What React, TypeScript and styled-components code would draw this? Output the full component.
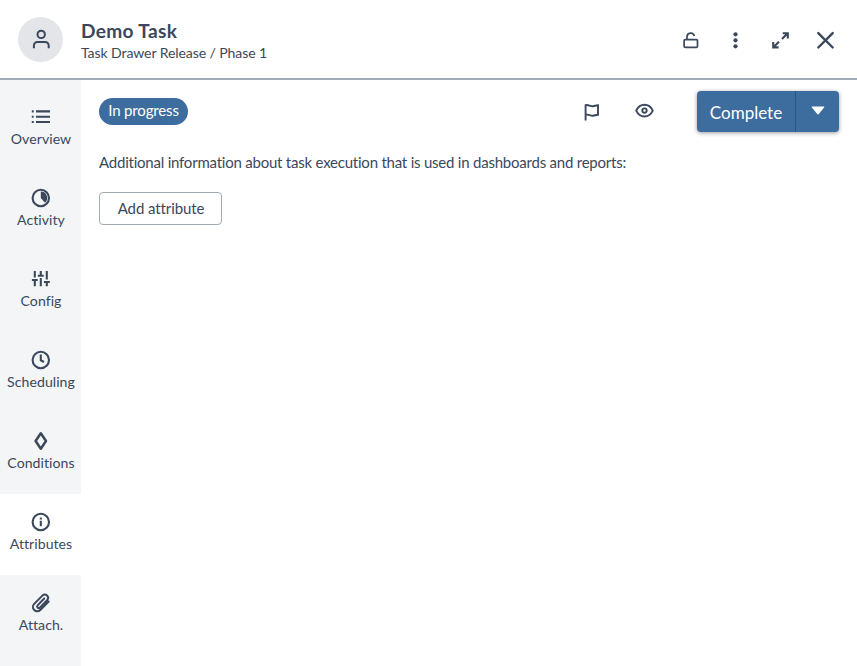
import React from 'react';
import styled, { createGlobalStyle } from 'styled-components';

const ink = '#3b485c';
const blue = '#3d6c9e';

const GlobalStyle = createGlobalStyle`
  * { box-sizing: border-box; }
  body {
    margin: 0;
    background: #fff;
    color: ${ink};
    font-family: Lato, "Liberation Sans", sans-serif;
    font-variant-ligatures: none;
  }
  button { font-family: inherit; color: inherit; }
`;

const Drawer = styled.div`
  display: flex;
  flex-direction: column;
  height: 100vh;
  overflow: hidden;
`;

const Header = styled.header`
  display: flex;
  align-items: center;
  height: 80px;
  flex: none;
  padding: 0 9px 0 18px;
  border-bottom: 2px solid #a0abb8;
`;

const Avatar = styled.div`
  display: grid;
  place-items: center;
  width: 45px;
  height: 45px;
  margin-right: 18px;
  border-radius: 50%;
  background: #e4e5e9;
`;

const Titles = styled.div`
  flex: 1;
  padding-top: 3px;
`;

const Title = styled.h1`
  margin: 0;
  font-size: 19.1px;
  line-height: 24px;
  font-weight: 700;
  letter-spacing: 0.33px;
`;

const Path = styled.div`
  font-size: 14.1px;
  line-height: 20px;
  letter-spacing: -0.11px;
`;

const IconButton = styled.button<{ $width?: number }>`
  display: grid;
  place-items: center;
  width: ${(p) => p.$width ?? 45}px;
  height: 45px;
  padding: 2px 0 0;
  border: 0;
  background: none;
`;

const Body = styled.div`
  display: flex;
  flex: 1;
  min-height: 0;
`;

const Sidebar = styled.nav`
  flex: none;
  width: 81px;
  padding-top: 9px;
  background: #f3f5f7;
`;

const NavItem = styled.a<{ $active?: boolean }>`
  display: flex;
  flex-direction: column;
  align-items: center;
  height: 81px;
  padding-top: 18px;
  background: ${(p) => (p.$active ? '#fff' : 'transparent')};
  font-size: 14.1px;
  line-height: 20px;
  letter-spacing: 0.05px;
  white-space: nowrap;
`;

const NavLabel = styled.span`
  margin-top: 1px;
  padding-left: 1px;
`;

const Content = styled.main`
  flex: 1;
  padding: 11px 18px 0;
`;

const Toolbar = styled.div`
  display: flex;
  align-items: center;
  height: 41px;
`;

const Status = styled.span`
  width: 89px;
  height: 27px;
  border-radius: 14px;
  background: ${blue};
  color: #fff;
  font-size: 15px;
  line-height: 25px;
  letter-spacing: -0.15px;
  text-align: center;
`;

const Tools = styled.div`
  display: flex;
  margin-left: auto;
  margin-right: 26px;
`;

const SplitButton = styled.div`
  display: flex;
  height: 41px;
  border-radius: 4px;
  background: ${blue};
  box-shadow: 0 1px 4px rgba(0, 0, 0, 0.4);
`;

const MainAction = styled.button`
  width: 99px;
  padding: 2px 0 0;
  border: 0;
  border-right: 1px solid #2c5682;
  background: none;
  color: #fff;
  font-size: 17px;
  letter-spacing: 0;
`;

const MenuAction = styled.button`
  display: grid;
  place-items: center;
  width: 43px;
  padding: 0;
  border: 0;
  background: none;
`;

const Description = styled.p`
  margin: 19px 0 0;
  font-size: 15px;
  line-height: 22px;
  letter-spacing: -0.22px;
`;

const AddButton = styled.button`
  width: 123px;
  height: 33px;
  margin-top: 19px;
  padding: 0 0 2px 1px;
  border: 1px solid #a0abb8;
  border-radius: 4px;
  background: #fff;
  font-size: 15px;
  letter-spacing: -0.1px;
`;

const Svg = styled.svg<{ $weight?: number }>`
  display: block;
  flex: none;
  width: 21px;
  height: 21px;
  overflow: visible;
  fill: none;
  stroke: ${ink};
  stroke-width: ${(p) => p.$weight ?? 2.1};
`;

const Solid = styled.g`
  fill: ${ink};
  stroke: none;
`;

const Caret = styled.svg`
  width: 14px;
  height: 9px;
  margin-bottom: 2px;
  fill: #fff;
`;

const navItems = [
  {
    label: 'Overview',
    icon: (
      <Svg viewBox="0 0 21 21">
        <path d="M6 4.4H20M6 9.7H20M6 15H20M1.8 4.4H3.7M1.8 9.7H3.7M1.8 15H3.7" />
      </Svg>
    ),
  },
  {
    label: 'Activity',
    icon: (
      <Svg viewBox="0 0 21 21">
        <circle cx="10.8" cy="10" r="8.2" />
        <Solid><path d="M10.8 3.6A6.4 6.4 0 0 1 15 14.8L10.8 10Z" /></Solid>
      </Svg>
    ),
  },
  {
    label: 'Config',
    icon: (
      <Svg viewBox="0 0 21 21">
        <path d="M4.8 2V8.5M4.8 11V17.3M1.9 11H7.7M10.8 2V6.5M7.9 6.8H13.7M10.8 9V17.3M16.8 2V10.5M16.8 13V17.3M13.9 13H19.8" />
      </Svg>
    ),
  },
  {
    label: 'Scheduling',
    icon: (
      <Svg viewBox="0 0 21 21">
        <circle cx="10.8" cy="10" r="8.2" />
        <path d="M10.8 4.5V10.3L14 12" />
      </Svg>
    ),
  },
  {
    label: 'Conditions',
    icon: (
      <Svg viewBox="0 0 21 21" $weight={2.5}>
        <path d="M10.8 2.3L16 10L10.8 17.7L5.6 10Z" strokeLinejoin="round" />
      </Svg>
    ),
  },
  {
    label: 'Attributes',
    active: true,
    icon: (
      <Svg viewBox="0 0 21 21">
        <circle cx="10.8" cy="10" r="8.2" />
        <path d="M10.8 5.5V7.4M10.8 8.8V14.3" />
      </Svg>
    ),
  },
  {
    label: 'Attach.',
    icon: (
      <Svg viewBox="0 0 21 21" $weight={2}>
        <path
          d="M14.2 5.5L7.6 12.4A1.5 1.5 0 0 0 9.8 14.6L17.3 7A3.3 3.3 0 0 0 12.6 2.4L4.2 10.9A4.3 4.3 0 0 0 10.3 17L18.7 8.5"
          strokeLinecap="round"
        />
      </Svg>
    ),
  },
];

export default function App() {
  return (
    <Drawer>
      <GlobalStyle />
      <Header>
        <Avatar>
          <Svg viewBox="0 0 21 21" $weight={2}>
            <circle cx="11.2" cy="5.4" r="3.7" />
            <path d="M3.9 19.2V16.5A3.6 3.6 0 0 1 7.5 12.9H15.1A3.6 3.6 0 0 1 18.7 16.5V19.2" />
          </Svg>
        </Avatar>
        <Titles>
          <Title>Demo Task</Title>
          <Path>Task Drawer Release / Phase 1</Path>
        </Titles>
        <IconButton aria-label="Unlock">
          <Svg viewBox="0 0 21 21" $weight={1.7}>
            <rect x="4.1" y="9.6" width="13.4" height="7.8" rx="1.2" />
            <path d="M7 9.5V6.7A3.7 3.7 0 0 1 14.3 6" />
          </Svg>
        </IconButton>
        <IconButton aria-label="More">
          <Svg viewBox="0 0 21 21">
            <Solid>
              <circle cx="10.5" cy="4.3" r="2.1" />
              <circle cx="10.5" cy="10.3" r="2.1" />
              <circle cx="10.5" cy="16.3" r="2.1" />
            </Solid>
          </Svg>
        </IconButton>
        <IconButton aria-label="Expand">
          <Svg viewBox="0 0 21 21">
            <path d="M12 9L17.6 3.2M12.7 3.2H17.8V8.5M9 11.8L3.4 17.3M3.2 12V17.4H8.6" />
          </Svg>
        </IconButton>
        <IconButton aria-label="Close">
          <Svg viewBox="0 0 21 21" $weight={2.4}>
            <path d="M3.3 3.1L17.7 17.5M17.7 3.1L3.3 17.5" strokeLinecap="round" />
          </Svg>
        </IconButton>
      </Header>
      <Body>
        <Sidebar>
          {navItems.map(({ label, icon, active }) => (
            <NavItem key={label} $active={active}>
              {icon}
              <NavLabel>{label}</NavLabel>
            </NavItem>
          ))}
        </Sidebar>
        <Content>
          <Toolbar>
            <Status>In progress</Status>
            <Tools>
              <IconButton aria-label="Flag" $width={53}>
                <Svg viewBox="0 0 21 21" $weight={1.9}>
                  <path d="M4.6 18.6V3.2C7.5 2.2 9 4.6 12 4.2C14 4 15 3.3 17 3.3V12.8C15 12.8 14 13.5 12 13.7C9 14 7.5 11.8 4.6 12.8" />
                </Svg>
              </IconButton>
              <IconButton aria-label="Watch" $width={53}>
                <Svg viewBox="0 0 21 21" $weight={1.9}>
                  <path d="M2.2 8.6C6 0.8 15 0.8 18.8 8.6C15 16.4 6 16.4 2.2 8.6Z" strokeLinejoin="round" />
                  <circle cx="10.5" cy="8.6" r="2.2" />
                </Svg>
              </IconButton>
            </Tools>
            <SplitButton>
              <MainAction>Complete</MainAction>
              <MenuAction aria-label="More actions">
                <Caret viewBox="0 0 14 9">
                  <path d="M1.2 0.5H12.8Q13.8 0.7 13.1 1.6L7.8 8Q7 8.8 6.2 8L0.9 1.6Q0.2 0.7 1.2 0.5Z" />
                </Caret>
              </MenuAction>
            </SplitButton>
          </Toolbar>
          <Description>
            Additional information about task execution that is used in dashboards and reports:
          </Description>
          <AddButton>Add attribute</AddButton>
        </Content>
      </Body>
    </Drawer>
  );
}
